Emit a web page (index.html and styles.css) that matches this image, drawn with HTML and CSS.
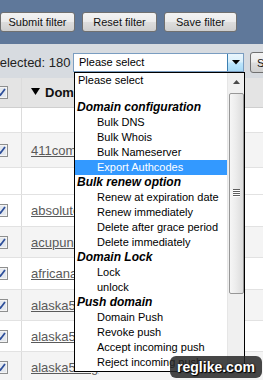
FILE: index.html
```html
<!DOCTYPE html>
<html>
<head>
<meta charset="utf-8">
<link rel="stylesheet" href="styles.css">
</head>
<body>
<div class="page">
  <div class="topbar">
    <button class="btn w75">Submit filter</button>
    <button class="btn w75">Reset filter</button>
    <button class="btn w73">Save filter</button>
  </div>
  <div class="selbar">
    <span class="sel-label">Selected: 180</span>
    <div class="combo">
      <span class="combo-text">Please select</span>
      <span class="combo-arrow"><svg width="8" height="5" viewBox="0 0 8 5"><path d="M0 0H8L4 4.5Z" fill="#000"/></svg></span>
    </div>
    <button class="btn btn-side">Submit</button>
  </div>
  <div class="grid">
    <div class="row head">
      <div class="cb-cell"><svg class="cb" width="13" height="13" viewBox="0 0 13 13"><rect x="0.5" y="0.5" width="12" height="12" fill="#f4f4f4" stroke="#8e8f8f"/><rect x="2" y="2" width="9" height="9" fill="#e4e8ee"/><path d="M3 6.5L5.5 9L10 3" fill="none" stroke="#2d4e9a" stroke-width="1.8"/></svg></div>
      <div class="cell"><svg class="sort" width="9" height="7" viewBox="0 0 9 7"><path d="M0 0H9L4.5 7Z" fill="#000"/></svg><span class="hd">Domain</span></div>
    </div>
    <div class="row blank h25"><div class="cb-cell"></div><div class="cell"></div></div>
    <div class="row alt h35">
      <div class="cb-cell"><svg class="cb" width="13" height="13" viewBox="0 0 13 13"><rect x="0.5" y="0.5" width="12" height="12" fill="#f4f4f4" stroke="#8e8f8f"/><rect x="2" y="2" width="9" height="9" fill="#e4e8ee"/><path d="M3 6.5L5.5 9L10 3" fill="none" stroke="#2d4e9a" stroke-width="1.8"/></svg></div>
      <div class="cell"><a class="lnk">411com.com</a></div>
    </div>
    <div class="row blank h27"><div class="cb-cell"></div><div class="cell"></div></div>
    <div class="row h32">
      <div class="cb-cell"><svg class="cb" width="13" height="13" viewBox="0 0 13 13"><rect x="0.5" y="0.5" width="12" height="12" fill="#f4f4f4" stroke="#8e8f8f"/><rect x="2" y="2" width="9" height="9" fill="#e4e8ee"/><path d="M3 6.5L5.5 9L10 3" fill="none" stroke="#2d4e9a" stroke-width="1.8"/></svg></div>
      <div class="cell"><a class="lnk">absolutely.com</a></div>
    </div>
    <div class="row alt h31">
      <div class="cb-cell"><svg class="cb" width="13" height="13" viewBox="0 0 13 13"><rect x="0.5" y="0.5" width="12" height="12" fill="#f4f4f4" stroke="#8e8f8f"/><rect x="2" y="2" width="9" height="9" fill="#e4e8ee"/><path d="M3 6.5L5.5 9L10 3" fill="none" stroke="#2d4e9a" stroke-width="1.8"/></svg></div>
      <div class="cell"><a class="lnk">acupuncture.com</a></div>
    </div>
    <div class="row h32">
      <div class="cb-cell"><svg class="cb" width="13" height="13" viewBox="0 0 13 13"><rect x="0.5" y="0.5" width="12" height="12" fill="#f4f4f4" stroke="#8e8f8f"/><rect x="2" y="2" width="9" height="9" fill="#e4e8ee"/><path d="M3 6.5L5.5 9L10 3" fill="none" stroke="#2d4e9a" stroke-width="1.8"/></svg></div>
      <div class="cell"><a class="lnk">africanart.com</a></div>
    </div>
    <div class="row alt h31">
      <div class="cb-cell"><svg class="cb" width="13" height="13" viewBox="0 0 13 13"><rect x="0.5" y="0.5" width="12" height="12" fill="#f4f4f4" stroke="#8e8f8f"/><rect x="2" y="2" width="9" height="9" fill="#e4e8ee"/><path d="M3 6.5L5.5 9L10 3" fill="none" stroke="#2d4e9a" stroke-width="1.8"/></svg></div>
      <div class="cell"><a class="lnk">alaska5.com</a></div>
    </div>
    <div class="row h31">
      <div class="cb-cell"><svg class="cb" width="13" height="13" viewBox="0 0 13 13"><rect x="0.5" y="0.5" width="12" height="12" fill="#f4f4f4" stroke="#8e8f8f"/><rect x="2" y="2" width="9" height="9" fill="#e4e8ee"/><path d="M3 6.5L5.5 9L10 3" fill="none" stroke="#2d4e9a" stroke-width="1.8"/></svg></div>
      <div class="cell"><a class="lnk">alaska5.net</a></div>
    </div>
    <div class="row alt h31">
      <div class="cb-cell"><svg class="cb" width="13" height="13" viewBox="0 0 13 13"><rect x="0.5" y="0.5" width="12" height="12" fill="#f4f4f4" stroke="#8e8f8f"/><rect x="2" y="2" width="9" height="9" fill="#e4e8ee"/><path d="M3 6.5L5.5 9L10 3" fill="none" stroke="#2d4e9a" stroke-width="1.8"/></svg></div>
      <div class="cell"><a class="lnk">alaska5.org</a></div>
    </div>
  </div>

  <div class="dropdown">
    <div class="items">
      <div class="opt first">Please select</div>
      <div class="opt spacer"></div>
      <div class="grp">Domain configuration</div>
      <div class="opt sub">Bulk DNS</div>
      <div class="opt sub">Bulk Whois</div>
      <div class="opt sub">Bulk Nameserver</div>
      <div class="opt sub sel">Export Authcodes</div>
      <div class="grp">Bulk renew option</div>
      <div class="opt sub">Renew at expiration date</div>
      <div class="opt sub">Renew immediately</div>
      <div class="opt sub">Delete after grace period</div>
      <div class="opt sub">Delete immediately</div>
      <div class="grp">Domain Lock</div>
      <div class="opt sub">Lock</div>
      <div class="opt sub">unlock</div>
      <div class="grp">Push domain</div>
      <div class="opt sub">Domain Push</div>
      <div class="opt sub">Revoke push</div>
      <div class="opt sub">Accept incoming push</div>
      <div class="opt sub">Reject incoming push</div>
    </div>
    <div class="scroll">
      <div class="sb-up"><svg width="7" height="4" viewBox="0 0 7 4"><path d="M0 4H7L3.5 0Z" fill="#4a4a4a"/></svg></div>
      <div class="sb-thumb"><svg width="7" height="9" viewBox="0 0 7 9"><path d="M0 0.5H7M0 2.5H7M0 4.5H7M0 6.5H7" stroke="#5e5e5e" stroke-width="1"/><path d="M0 1.5H7M0 3.5H7M0 5.5H7M0 7.5H7" stroke="#ffffff" stroke-width="1"/></svg></div>
    </div>
  </div>

  <div class="watermark">reglike.com</div>
</div>
</body>
</html>
```

FILE: styles.css
```css
html, body {
  margin: 0;
  padding: 0;
}
body {
  width: 263px;
  height: 380px;
  overflow: hidden;
  font-family: "Liberation Sans", Arial, sans-serif;
  background: #ffffff;
}
.page {
  position: relative;
  width: 263px;
  height: 380px;
  overflow: hidden;
}
.topbar {
  height: 44px;
  box-sizing: border-box;
  background: #5f789a;
  display: flex;
  align-items: flex-start;
  gap: 7px;
  padding: 12px 0 0 0;
}
.btn {
  box-sizing: border-box;
  height: 20px;
  margin: 0;
  padding: 0;
  border: 1px solid #707070;
  border-radius: 3px;
  background: linear-gradient(#f3f3f3 0%, #ebebeb 48%, #dddddd 52%, #cfcfcf 100%);
  font-family: "Liberation Sans", Arial, sans-serif;
  font-size: 11px;
  color: #111;
  text-align: center;
  line-height: 18px;
}
.w75 { width: 75px; }
.w73 { width: 73px; }
.selbar {
  height: 34px;
  box-sizing: border-box;
  background: #d7dbe0;
  display: flex;
  align-items: flex-start;
  padding-top: 9px;
}
.sel-label {
  flex: none;
  width: 82px;
  margin-left: -9px;
  font-size: 13px;
  line-height: 19px;
  color: #222;
  white-space: nowrap;
}
.combo {
  flex: none;
  width: 171px;
  height: 19px;
  box-sizing: border-box;
  border: 1px solid #7a9dc1;
  background: #fff;
  display: flex;
}
.combo-text {
  flex: 1;
  font-size: 11px;
  line-height: 17px;
  padding-left: 5px;
  color: #000;
}
.combo-arrow {
  width: 16px;
  box-sizing: border-box;
  border-left: 1px solid #3c7fb1;
  background: linear-gradient(#eaf6fd 0%, #d9f0fc 48%, #bee6fd 52%, #a7d9f5 100%);
  display: flex;
  align-items: center;
  justify-content: center;
}
.btn-side {
  flex: none;
  width: 40px;
  height: 21px;
  margin-left: 6px;
  margin-top: -1px;
  text-align: left;
  padding-left: 6px;
}
.grid {
  display: flex;
  flex-direction: column;
}
.row {
  display: flex;
  box-sizing: border-box;
  border-bottom: 1px solid #e2e2e2;
  background: #ffffff;
}
.row.alt { background: #f4f4f4; }
.row.head {
  height: 30px;
  background: #e4e4e4;
  border-bottom: 1px solid #cfcfcf;
}
.h25 { height: 25px; }
.h27 { height: 27px; }
.h31 { height: 31px; }
.h32 { height: 32px; }
.h35 { height: 35px; }
.cb-cell {
  flex: none;
  width: 22px;
  box-sizing: border-box;
  border-right: 1px solid #dcdcdc;
  overflow: hidden;
  display: flex;
  align-items: center;
}
.cb {
  flex: none;
  margin-left: -5px;
}
.cell {
  flex: 1;
  display: flex;
  align-items: center;
  padding-left: 9px;
  white-space: nowrap;
  overflow: hidden;
}
.sort { margin-right: 5px; margin-top: -2px; }
.hd {
  font-size: 13px;
  font-weight: bold;
  color: #111;
}
.lnk {
  font-size: 13px;
  color: #5a5a5a;
  text-decoration: underline;
}
.dropdown {
  position: absolute;
  left: 74px;
  top: 72px;
  width: 171px;
  height: 300px;
  box-sizing: border-box;
  border: 1px solid #000;
  background: #fff;
  display: flex;
}
.items {
  flex: 1;
  display: flex;
  flex-direction: column;
  font-size: 11px;
  color: #000;
}
.opt, .grp {
  height: 15px;
  line-height: 15px;
  white-space: nowrap;
}
.opt.first { padding-left: 3px; }
.opt.spacer { height: 12px; }
.grp {
  padding-left: 2px;
  font-size: 12px;
  font-weight: bold;
  font-style: italic;
}
.opt.sub { padding-left: 22px; }
.opt.sel {
  background: #3399ff;
  color: #fff;
}
.scroll {
  flex: none;
  width: 17px;
  background: #f0f0f0;
  border-left: 1px solid #e6e6e6;
  box-sizing: border-box;
  display: flex;
  flex-direction: column;
  align-items: center;
}
.sb-up {
  height: 17px;
  width: 100%;
  display: flex;
  align-items: center;
  justify-content: center;
}
.sb-thumb {
  margin-top: 3px;
  width: 15px;
  height: 201px;
  box-sizing: border-box;
  border: 1px solid #979797;
  border-radius: 2px;
  background: linear-gradient(to right, #f6f6f6 0%, #ececec 45%, #dcdcdc 100%);
  display: flex;
  align-items: center;
  justify-content: center;
}
.watermark {
  position: absolute;
  left: 170px;
  top: 356px;
  width: 92px;
  height: 22px;
  box-sizing: border-box;
  border-radius: 6px;
  background: rgba(38, 38, 38, 0.85);
  color: #fff;
  font-size: 14px;
  font-weight: bold;
  line-height: 22px;
  text-align: center;
  text-shadow: 0 0 2px #000, 1px 1px 1px #000;
}
```
